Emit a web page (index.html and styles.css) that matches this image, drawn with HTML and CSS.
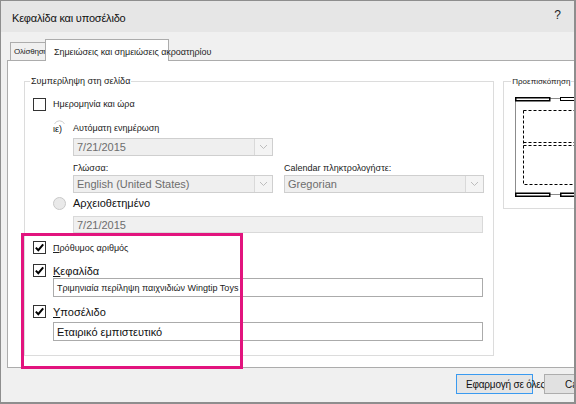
FILE: index.html
```html
<!DOCTYPE html>
<html lang="el">
<head>
<meta charset="utf-8">
<title>Κεφαλίδα και υποσέλιδο</title>
<link rel="stylesheet" href="styles.css">
</head>
<body>
<div class="window">
  <div class="titlebar">
    <span class="title">Κεφαλίδα και υποσέλιδο</span>
    <span class="help">?</span>
  </div>

  <div class="tabs">
    <div class="tab">Ολίσθηση</div>
    <div class="tab active">Σημειώσεις και σημειώσεις ακροατηρίου</div>
  </div>

  <div class="panel">
    <div class="group main">
      <span class="legend">Συμπερίληψη στη σελίδα</span>

      <div class="row row-date">
        <span class="check"></span>
        <span class="small">Ημερομηνία και ώρα</span>
      </div>

      <div class="row row-auto indent1">
        <span class="stub">
          <svg class="stub-arc" width="13" height="5" viewBox="0 0 13 5"><path d="M1.5 5 A5.5 5.5 0 0 1 11.5 5" fill="none" stroke="#cfcfcf" stroke-width="1"/></svg>
          <span class="small stub-text">ιε)</span>
        </span>
        <span class="small">Αυτόματη ενημέρωση</span>
      </div>

      <div class="combo combo-date indent2">
        <span class="value">7/21/2015</span>
        <span class="arrow"><svg width="9" height="6" viewBox="0 0 9 6"><path d="M1 1 L4.5 4.5 L8 1" fill="none" stroke="#bdbdbd" stroke-width="1"/></svg></span>
      </div>

      <div class="pair pair-labels indent2">
        <span class="small">Γλώσσα:</span>
        <span class="small">Calendar πληκτρολογήστε:</span>
      </div>

      <div class="pair indent2">
        <div class="combo">
          <span class="value">English (United States)</span>
          <span class="arrow"><svg width="9" height="6" viewBox="0 0 9 6"><path d="M1 1 L4.5 4.5 L8 1" fill="none" stroke="#bdbdbd" stroke-width="1"/></svg></span>
        </div>
        <div class="combo">
          <span class="value">Gregorian</span>
          <span class="arrow"><svg width="9" height="6" viewBox="0 0 9 6"><path d="M1 1 L4.5 4.5 L8 1" fill="none" stroke="#bdbdbd" stroke-width="1"/></svg></span>
        </div>
      </div>

      <div class="row row-fixed indent1">
        <svg class="radio" width="13" height="13" viewBox="0 0 13 13"><circle cx="6.5" cy="6.5" r="6" fill="#e9e9e9" stroke="#c8c8c8" stroke-width="1"/></svg>
        <span class="large">Αρχειοθετημένο</span>
      </div>

      <div class="field disabled indent2">7/21/2015</div>

      <div class="row row-number">
        <svg class="tick" width="13" height="13" viewBox="0 0 13 13"><rect x="0.5" y="0.5" width="12" height="12" fill="#fff" stroke="#333"/><path d="M2.8 6.6 L5.3 9.2 L10.2 3.4" fill="none" stroke="#000" stroke-width="2"/></svg>
        <span class="small"><u>Π</u>ρόθυμος αριθμός</span>
      </div>

      <div class="row row-header">
        <svg class="tick" width="13" height="13" viewBox="0 0 13 13"><rect x="0.5" y="0.5" width="12" height="12" fill="#fff" stroke="#333"/><path d="M2.8 6.6 L5.3 9.2 L10.2 3.4" fill="none" stroke="#000" stroke-width="2"/></svg>
        <span class="large"><u>Κ</u>εφαλίδα</span>
      </div>
      <div class="field field-header indent1">Τριμηνιαία περίληψη παιχνιδιών Wingtip Toys</div>

      <div class="row row-footer">
        <svg class="tick" width="13" height="13" viewBox="0 0 13 13"><rect x="0.5" y="0.5" width="12" height="12" fill="#fff" stroke="#333"/><path d="M2.8 6.6 L5.3 9.2 L10.2 3.4" fill="none" stroke="#000" stroke-width="2"/></svg>
        <span class="large"><u>Υ</u>ποσέλιδο</span>
      </div>
      <div class="field field-footer indent1">Εταιρικό εμπιστευτικό</div>
    </div>

    <div class="group preview">
      <span class="legend">Προεπισκόπηση</span>
      <svg class="page" width="70" height="102" viewBox="0 0 70 102">
        <!-- page outline -->
        <rect x="0.5" y="2.5" width="90" height="96" fill="#fff" stroke="#8c8c8c"/>
        <!-- header / footer placeholders -->
        <rect x="0.75" y="1.75" width="34" height="3" fill="#fff" stroke="#000" stroke-width="1.5"/>
        <rect x="45.5" y="1.5" width="40" height="3" fill="#fff" stroke="#000"/>
        <rect x="0.75" y="97.25" width="34" height="3" fill="#fff" stroke="#000" stroke-width="1.5"/>
        <rect x="45.75" y="97.25" width="40" height="3" fill="#fff" stroke="#000" stroke-width="1.5"/>
        <!-- content area -->
        <rect x="8.5" y="14.5" width="80" height="74" fill="none" stroke="#000" stroke-dasharray="3 2"/>
        <path d="M8.5 46.5 H90 M8.5 49.5 H90" fill="none" stroke="#000" stroke-dasharray="3 2"/>
      </svg>
    </div>
  </div>

  <div class="buttons">
    <div class="btn cancel">Cancel</div>
    <div class="btn default">Εφαρμογή σε όλες</div>
  </div>

  <div class="highlight"></div>
</div>
</body>
</html>
```

FILE: styles.css
```css
* {
  box-sizing: border-box;
}

body {
  margin: 0;
  background: #fff;
}

.window {
  position: relative;
  width: 576px;
  height: 404px;
  border: 1px solid #8e8e8e;
  border-right-width: 2px;
  border-bottom-width: 2px;
  background: #f0f0f0;
  overflow: hidden;
  font-family: "Liberation Sans", "DejaVu Sans", sans-serif;
  color: #1e1e1e;
}

/* title bar */
.titlebar {
  height: 31px;
  display: flex;
  align-items: center;
  padding: 2px 0 0 11px;
  background: #e6e6e6;
}

.title {
  font-size: 11px;
  letter-spacing: -0.2px;
  color: #111;
}

.help {
  margin-left: auto;
  margin-right: 13px;
  align-self: flex-start;
  margin-top: 5px;
  font-size: 12px;
  color: #222;
}

/* tab strip */
.tabs {
  position: relative;
  z-index: 1;
  display: flex;
  align-items: flex-end;
  height: 22px;
  margin: 7px 0 -1px 9px;
}

.tab {
  width: 36px;
  height: 18px;
  margin-bottom: 1px;
  padding: 4px 0 0 3px;
  border: 1px solid #acacac;
  border-bottom: none;
  background: #f0f0f0;
  font-size: 8px;
  letter-spacing: -0.2px;
  white-space: nowrap;
}

.tab.active {
  width: 124px;
  height: 22px;
  margin-left: -1px;
  margin-bottom: 0;
  padding: 7px 0 0 8px;
  background: #fff;
  font-size: 9px;
  letter-spacing: -0.05px;
}

/* white page of the tab */
.panel {
  display: flex;
  align-items: flex-start;
  height: 308px;
  margin: 0 -20px 0 6px;
  padding: 20px 0 0 16px;
  border: 1px solid #acacac;
  background: #fff;
}

.group {
  position: relative;
  border: 1px solid #dcdcdc;
}

.legend {
  position: absolute;
  top: -6px;
  left: 5px;
  padding: 0 1px;
  background: #fff;
  font-size: 9px;
  line-height: 11px;
  white-space: nowrap;
  color: #222;
}

.main {
  display: flex;
  flex-direction: column;
  align-items: flex-start;
  width: 472px;
  height: 275px;
  padding-left: 8px;
}

.preview {
  width: 90px;
  height: 128px;
  margin-left: 9px;
  padding: 14px 0 0 11px;
}

.preview .legend {
  left: 7px;
  font-size: 8px;
}

.page {
  display: block;
}

/* text sizes */
.small {
  font-size: 9px;
  color: #222;
  white-space: nowrap;
}

.large {
  font-size: 11px;
  color: #111;
  white-space: nowrap;
}

u {
  text-underline-offset: 1px;
}

/* rows */
.row {
  display: flex;
  align-items: center;
  gap: 7px;
  height: 13px;
}

.indent1 {
  margin-left: 20px;
}

.indent2 {
  margin-left: 40px;
}

.check {
  flex: none;
  width: 13px;
  height: 13px;
  border: 1px solid #333;
  background: #fff;
}

.tick,
.radio {
  flex: none;
  display: block;
}

.row-date {
  height: 16px;
  margin-top: 14px;
}

.row-auto {
  height: 16px;
  margin-top: 8px;
  gap: 0;
}

.stub {
  position: relative;
  width: 20px;
  height: 16px;
  display: flex;
  align-items: center;
}

.stub-arc {
  position: absolute;
  top: -1px;
  left: 0;
}

.stub-text {
  padding-top: 1px;
  color: #111;
}

.row-fixed {
  height: 14px;
  margin-top: 3px;
}

.row-number {
  margin-top: 8px;
}

.row-header {
  margin-top: 10px;
}

.row-footer {
  margin-top: 8px;
}

/* combo boxes */
.combo {
  display: flex;
  align-items: center;
  width: 200px;
  height: 18px;
  border: 1px solid #cfcfcf;
  background: #efefef;
  color: #6d6d6d;
  font-size: 11px;
}

.combo .value {
  flex: 1;
  padding-left: 3px;
  white-space: nowrap;
}

.combo .arrow {
  display: flex;
  align-items: center;
  justify-content: center;
  align-self: stretch;
  width: 18px;
  border-left: 1px solid #d9d9d9;
  background: #f4f4f4;
}

.combo-date {
  margin-top: 2px;
}

.pair {
  display: grid;
  grid-template-columns: 200px 200px;
  column-gap: 11px;
}

.pair-labels {
  height: 15px;
  margin-top: 4px;
  align-items: center;
}

/* text fields */
.field {
  display: flex;
  align-items: center;
  width: 430px;
  height: 19px;
  padding-left: 3px;
  border: 1px solid #ababab;
  background: #fff;
  white-space: nowrap;
}

.field.disabled {
  width: 410px;
  height: 17px;
  margin-top: 6px;
  border-color: #d9d9d9;
  background: #f0f0f0;
  color: #6d6d6d;
  font-size: 11px;
}

.field-header {
  margin-top: 1px;
  font-size: 9px;
  color: #222;
}

.field-footer {
  margin-top: 4px;
  font-size: 11px;
  color: #111;
}

/* dialog buttons; the default one is painted last so its overflowing label stays on top */
.buttons {
  display: flex;
  flex-direction: row-reverse;
  justify-content: flex-end;
  gap: 11px;
  margin: 6px 0 0 455px;
}

.btn {
  flex: none;
  display: flex;
  align-items: center;
  width: 77px;
  height: 20px;
  padding-left: 9px;
  border: 1px solid #adadad;
  background: #e1e1e1;
  font-size: 10px;
  color: #111;
  white-space: nowrap;
}

.btn.default {
  border-color: #3a9af0;
  background: #e5e5e5;
  letter-spacing: -0.2px;
}

.btn.cancel {
  padding-left: 20px;
  overflow: hidden;
}

/* pink callout around the header/footer options */
.highlight {
  position: absolute;
  left: 20px;
  top: 232px;
  width: 222px;
  height: 136px;
  border: 3px solid #e2147e;
  pointer-events: none;
}
```
